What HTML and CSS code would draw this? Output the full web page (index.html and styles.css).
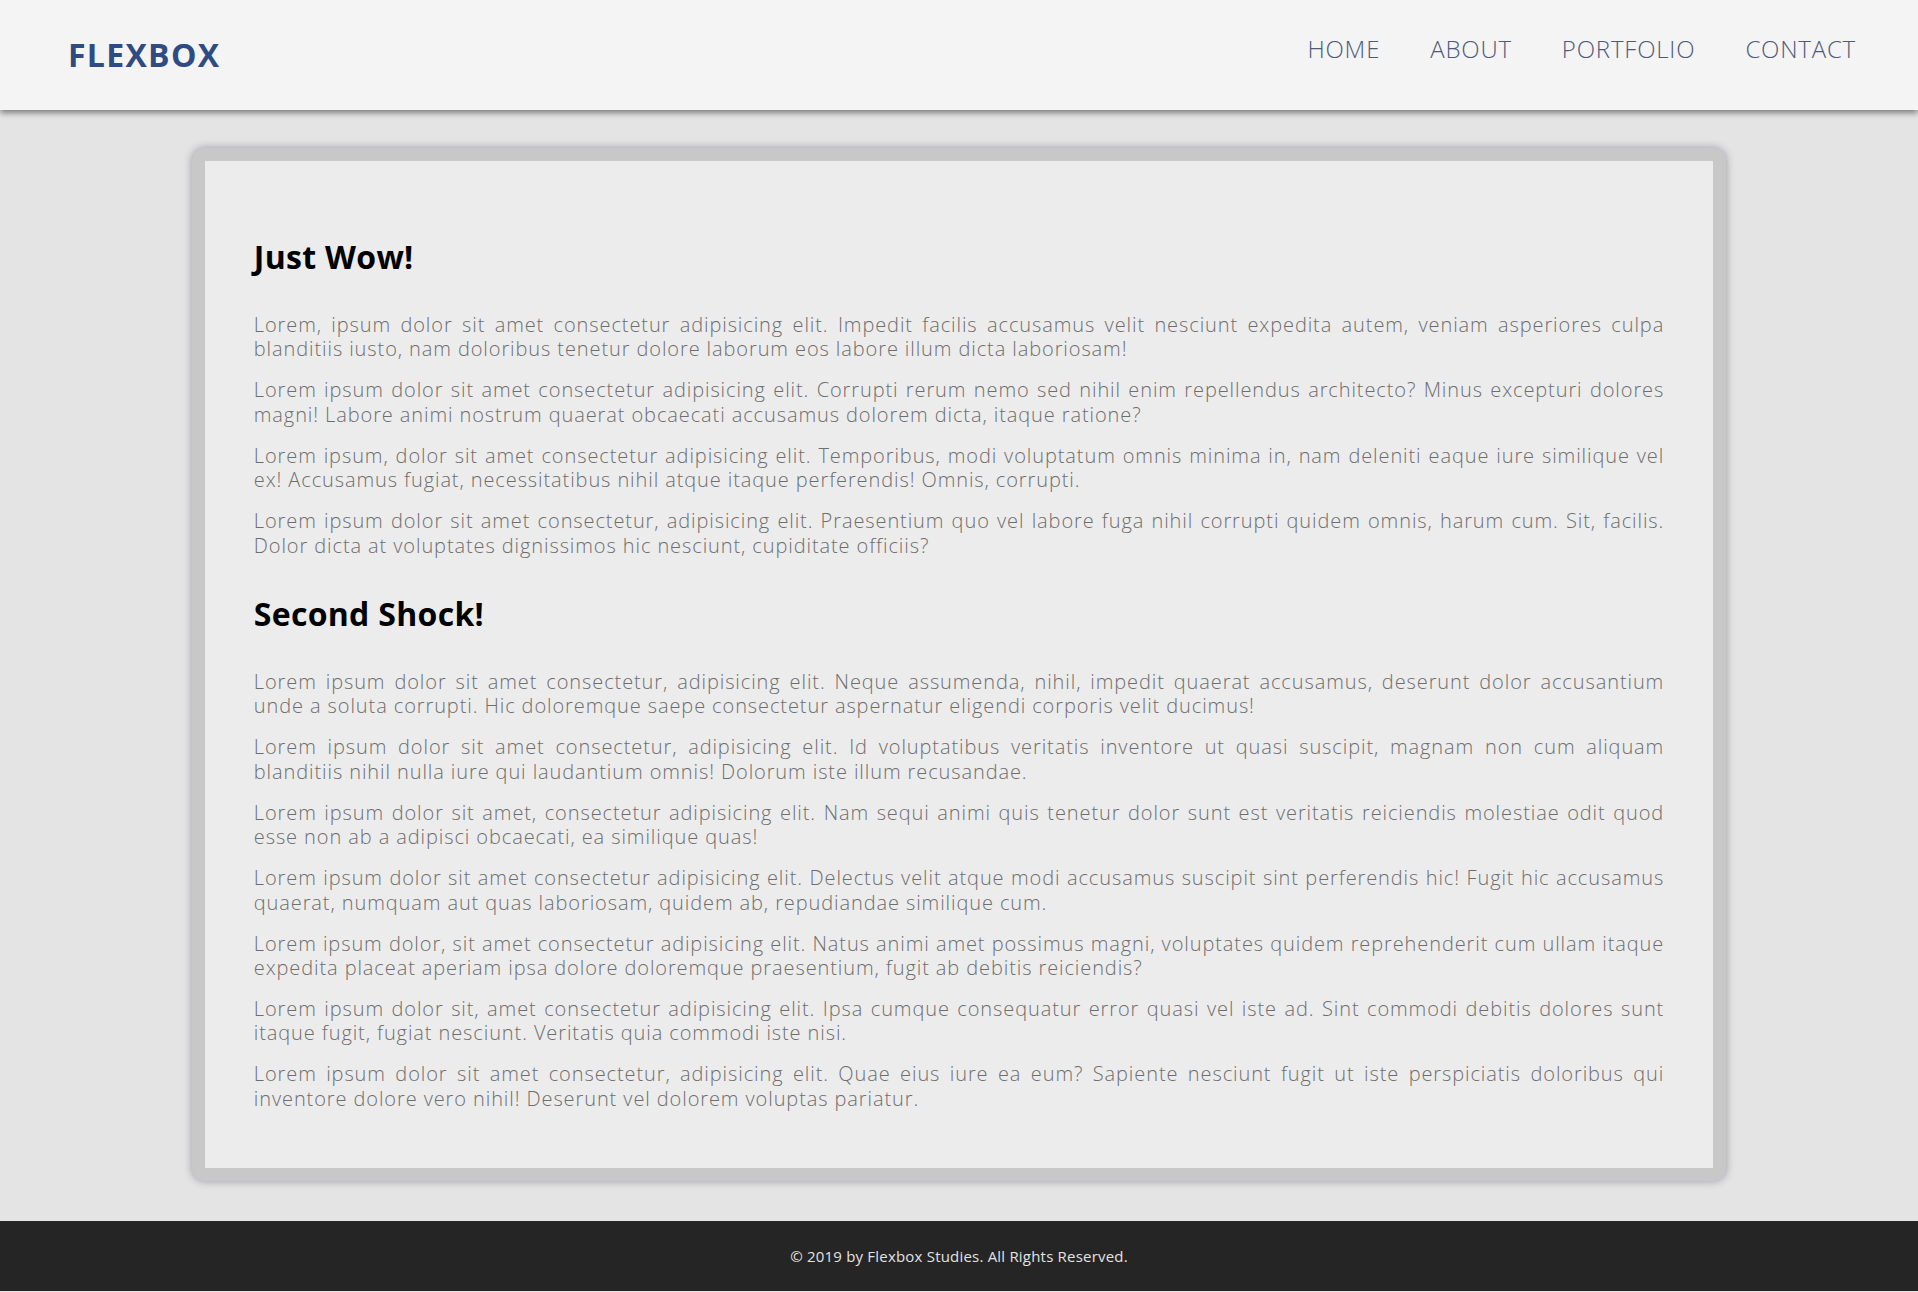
FILE: index.html
```html
<!DOCTYPE html>
<html lang="en">
<head>
<meta charset="utf-8">
<title>Flexbox</title>
<link rel="stylesheet" href="styles.css">
</head>
<body>
<header class="site-header">
  <div class="logo">FLEXBOX</div>
  <nav class="nav">
    <a href="#">HOME</a>
    <a href="#">ABOUT</a>
    <a href="#">PORTFOLIO</a>
    <a href="#">CONTACT</a>
  </nav>
</header>
<main class="main">
  <article class="card">
    <section class="block">
      <h2>Just Wow!</h2>
      <p>Lorem, ipsum dolor sit amet consectetur adipisicing elit. Impedit facilis accusamus velit nesciunt expedita autem, veniam asperiores culpa blanditiis iusto, nam doloribus tenetur dolore laborum eos labore illum dicta laboriosam!</p>
      <p>Lorem ipsum dolor sit amet consectetur adipisicing elit. Corrupti rerum nemo sed nihil enim repellendus architecto? Minus excepturi dolores magni! Labore animi nostrum quaerat obcaecati accusamus dolorem dicta, itaque ratione?</p>
      <p>Lorem ipsum, dolor sit amet consectetur adipisicing elit. Temporibus, modi voluptatum omnis minima in, nam deleniti eaque iure similique vel ex! Accusamus fugiat, necessitatibus nihil atque itaque perferendis! Omnis, corrupti.</p>
      <p>Lorem ipsum dolor sit amet consectetur, adipisicing elit. Praesentium quo vel labore fuga nihil corrupti quidem omnis, harum cum. Sit, facilis. Dolor dicta at voluptates dignissimos hic nesciunt, cupiditate officiis?</p>
    </section>
    <section class="block">
      <h2>Second Shock!</h2>
      <p>Lorem ipsum dolor sit amet consectetur, adipisicing elit. Neque assumenda, nihil, impedit quaerat accusamus, deserunt dolor accusantium unde a soluta corrupti. Hic doloremque saepe consectetur aspernatur eligendi corporis velit ducimus!</p>
      <p>Lorem ipsum dolor sit amet consectetur, adipisicing elit. Id voluptatibus veritatis inventore ut quasi suscipit, magnam non cum aliquam blanditiis nihil nulla iure qui laudantium omnis! Dolorum iste illum recusandae.</p>
      <p>Lorem ipsum dolor sit amet, consectetur adipisicing elit. Nam sequi animi quis tenetur dolor sunt est veritatis reiciendis molestiae odit quod esse non ab a adipisci obcaecati, ea similique quas!</p>
      <p>Lorem ipsum dolor sit amet consectetur adipisicing elit. Delectus velit atque modi accusamus suscipit sint perferendis hic! Fugit hic accusamus quaerat, numquam aut quas laboriosam, quidem ab, repudiandae similique cum.</p>
      <p>Lorem ipsum dolor, sit amet consectetur adipisicing elit. Natus animi amet possimus magni, voluptates quidem reprehenderit cum ullam itaque expedita placeat aperiam ipsa dolore doloremque praesentium, fugit ab debitis reiciendis?</p>
      <p>Lorem ipsum dolor sit, amet consectetur adipisicing elit. Ipsa cumque consequatur error quasi vel iste ad. Sint commodi debitis dolores sunt itaque fugit, fugiat nesciunt. Veritatis quia commodi iste nisi.</p>
      <p>Lorem ipsum dolor sit amet consectetur, adipisicing elit. Quae eius iure ea eum? Sapiente nesciunt fugit ut iste perspiciatis doloribus qui inventore dolore vero nihil! Deserunt vel dolorem voluptas pariatur.</p>
    </section>
  </article>
</main>
<footer class="site-footer">
  <p>&copy; 2019 by Flexbox Studies. All Rights Reserved.</p>
</footer>
</body>
</html>
```
FILE: styles.css
```css
* { box-sizing: border-box; }

body {
  margin: 0;
  background: #e4e4e4;
  font-family: "Open Sans", "Liberation Sans", sans-serif;
}

.site-header {
  position: relative;
  z-index: 1;
  display: flex;
  justify-content: space-between;
  align-items: center;
  height: 110px;
  padding: 0 62px 0 68px;
  background: #f4f4f4;
  box-shadow: 0 3px 6px rgba(0, 0, 0, 0.45);
}

.logo {
  font-size: 32px;
  font-weight: 700;
  letter-spacing: 1.3px;
  color: #2f4b83;
  line-height: 1;
}

.nav {
  display: flex;
  gap: 50px;
  margin-bottom: 12px;
}

.nav a {
  font-size: 24px;
  font-weight: 300;
  letter-spacing: 0.8px;
  color: #4f5a7a;
  text-decoration: none;
  line-height: 1;
}

.main {
  padding: 38px 0 40px;
}

.card {
  width: 80%;
  margin: 0 auto;
  padding: 40px 49px 40px;
  background: #ececec;
  border: 13px solid #c8c8c8;
  border-radius: 13px;
  box-shadow: 0 0 8px rgba(40, 40, 70, 0.4);
}

.block h2 {
  margin: 36px 0 37px;
  font-size: 32px;
  line-height: 39px;
  font-weight: 700;
  letter-spacing: 0.3px;
  color: #000;
}

.block p {
  margin: 16.6px 0;
  font-size: 20px;
  line-height: 24.4px;
  font-weight: 300;
  letter-spacing: 0.9px;
  color: #6e6e6e;
  text-align: justify;
}

.site-footer {
  height: 70px;
  display: flex;
  align-items: center;
  justify-content: center;
  background: #252525;
}

.site-footer p {
  margin: 0;
  font-size: 15px;
  letter-spacing: 0.2px;
  color: #e2e2e2;
}
```
